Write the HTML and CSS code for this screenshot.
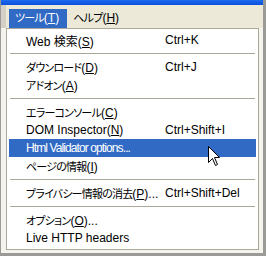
FILE: index.html
```html
<!DOCTYPE html>
<html lang="ja">
<head>
    <meta charset="UTF-8">
    <title>ツール menu</title>
    <link rel="stylesheet" href="styles.css">
</head>
<body>

    <div class="screen">
        <div class="titlebar"></div>

        <!-- Menu bar -->
        <div class="menubar">
            <span class="menu-title open"><span class="ja">ツール</span>(<u>T</u>)</span>
            <span class="menu-title"><span class="ja">ヘルプ</span>(<u>H</u>)</span>
        </div>

        <div class="page"></div>

        <!-- Tools dropdown -->
        <div class="popup">
            <div class="item"><span class="label">Web 検索(<u>S</u>)</span><span class="key">Ctrl+K</span></div>
            <div class="sep"></div>
            <div class="item"><span class="label"><span class="ja">ダウンロード</span>(<u>D</u>)</span><span class="key">Ctrl+J</span></div>
            <div class="item"><span class="label"><span class="ja">アドオン</span>(<u>A</u>)</span></div>
            <div class="sep"></div>
            <div class="item"><span class="label"><span class="ja">エラーコンソール</span>(<u>C</u>)</span></div>
            <div class="item"><span class="label">DOM Inspector(<u>N</u>)</span><span class="key">Ctrl+Shift+I</span></div>
            <div class="item active"><span class="label narrow">Html Validator options...</span></div>
            <div class="item"><span class="label"><span class="ja">ページの情報</span>(<u>I</u>)</span></div>
            <div class="sep"></div>
            <div class="item"><span class="label"><span class="ja">プライバシー情報の消去</span>(<u>P</u>)...</span><span class="key">Ctrl+Shift+Del</span></div>
            <div class="sep"></div>
            <div class="item"><span class="label"><span class="ja">オプション</span>(<u>O</u>)...</span></div>
            <div class="item"><span class="label">Live HTTP headers</span></div>
        </div>

        <!-- Mouse pointer -->
        <svg class="cursor" width="13" height="21" viewBox="0 0 13 21">
            <path d="M0.5 0.5 L0.5 16.5 L4.5 12.5 L7.5 19.5 L9.5 18.5 L6.5 11.5 L11.5 11.5 Z" fill="#fff" stroke="#000" stroke-width="1"/>
        </svg>
    </div>

</body>
</html>
```

FILE: styles.css
```css
/* Whole screenshot */
body {
    margin: 0;
    background-color: #9a9a96;
    font-family: "Liberation Sans", "Noto Sans CJK JP", sans-serif;
    font-size: 12px;
    font-feature-settings: "palt";
    color: #000;
}

u {
    text-decoration: underline;
    text-underline-offset: 1px;
}

.ja {
    font-size: 11px;
    letter-spacing: -0.8px;
}

.screen {
    position: relative;
    width: 262px;
    height: 253px;
    margin-left: 1px;
    background-color: #f4f3ee;
    overflow: hidden;
}

.titlebar {
    height: 5px;
    background: linear-gradient(#1c6cf0, #0a4fd8);
}

/* Menu bar */
.menubar {
    height: 23px;
    background-color: #ece9d8;
    border-left: 5px solid #d4d0c8;
    display: flex;
    align-items: flex-end;
    padding-left: 3px;
}

.menu-title {
    height: 19px;
    line-height: 19px;
    padding: 0 7px 0 6px;
}

.menu-title.open {
    background-color: #316ac5;
    color: #fff;
    padding-right: 8px;
}

.page {
    height: 225px;
    border-left: 4px solid #f4f3ee;
}

/* Dropdown */
.popup {
    position: absolute;
    left: 5px;
    top: 28px;
    width: 247px;
    padding: 2px;
    background-color: #fff;
    border: 1px solid #aca899;
}

.item {
    display: flex;
    align-items: center;
    height: 18px;
    padding-left: 17px;
    white-space: nowrap;
}

.item.active {
    background-color: #316ac5;
    color: #fff;
}

.label {
    width: 139px;
    flex-shrink: 0;
}

.label.narrow {
    letter-spacing: -0.9px;
}

.sep {
    height: 1px;
    margin: 4px 1px;
    background-color: #aca899;
}

.cursor {
    position: absolute;
    left: 207px;
    top: 146px;
}
```
